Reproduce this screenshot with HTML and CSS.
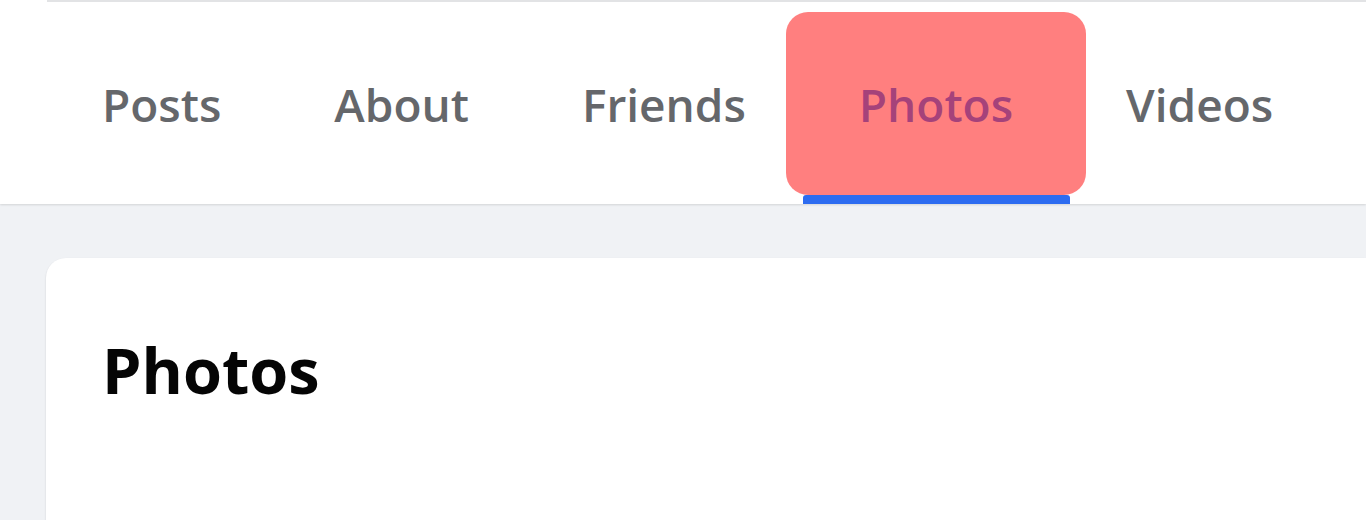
FILE: index.html
```html
<!DOCTYPE html>
<html lang="en">
<head>
<meta charset="utf-8">
<title>Profile – Photos</title>
<link rel="stylesheet" href="styles.css">
</head>
<body>
<header class="header">
  <div class="header-top"></div>
  <nav class="tabs">
    <a class="tab">Posts</a>
    <a class="tab">About</a>
    <a class="tab">Friends</a>
    <a class="tab tab-active">Photos</a>
    <a class="tab">Videos</a>
  </nav>
</header>
<main class="content">
  <section class="card">
    <h2 class="card-title">Photos</h2>
  </section>
</main>
</body>
</html>
```
FILE: styles.css
```css
* { box-sizing: border-box; }
html, body { margin: 0; padding: 0; }
body {
  background: #f0f2f5;
  font-family: "Open Sans", "Noto Sans", sans-serif;
  overflow: hidden;
  height: 520px;
}
.header {
  background: #ffffff;
  box-shadow: 0 1px 2px rgba(0, 0, 0, 0.12);
  position: relative;
}
.header-top {
  height: 2px;
  margin-left: 47px;
  background: #e2e3e5;
}
.tabs {
  display: flex;
  height: 202px;
  padding-left: 46px;
}
.tab {
  position: relative;
  display: flex;
  align-items: flex-start;
  padding: 79px 57px 0 56px;
  font-size: 46px;
  line-height: 1;
  color: #65676b;
  font-weight: 600;
  white-space: nowrap;
}
.tab-active {
  color: #4a84f5;
}
.tab-active::before {
  content: "";
  position: absolute;
  top: 10px;
  bottom: 9px;
  left: -17px;
  right: -16px;
  border-radius: 22px;
  background: rgba(255, 0, 0, 0.5);
}
.tab-active::after {
  content: "";
  position: absolute;
  left: 0;
  right: 0;
  bottom: 0;
  height: 9px;
  border-radius: 3px 3px 0 0;
  background: #2d6cf0;
}
.content {
  padding: 54px 0 0 46px;
}
.card {
  background: #ffffff;
  border-radius: 20px 0 0 0;
  box-shadow: 0 1px 2px rgba(0, 0, 0, 0.15);
  min-height: 320px;
  padding: 80px 0 0 56px;
}
.card-title {
  margin: 0;
  font-size: 63px;
  line-height: 1;
  font-weight: 700;
  color: #050505;
}
```
